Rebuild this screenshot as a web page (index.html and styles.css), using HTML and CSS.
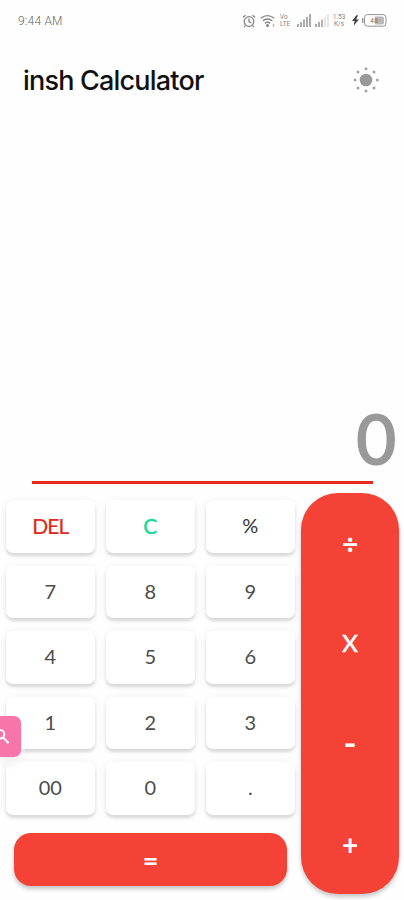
FILE: index.html
```html
<!DOCTYPE html>
<html lang="en">
<head>
<meta charset="utf-8">
<title>insh Calculator</title>
<link rel="stylesheet" href="styles.css">
</head>
<body>
<div class="status">
  <span class="time">9:44 AM</span>
  <div class="indicators">
    <svg class="alarm" width="14" height="14" viewBox="0 0 14 14" fill="none" stroke="#858585" stroke-width="1.3"><circle cx="7" cy="7.5" r="4.8"/><path d="M7 4.5v3.3l2.3 1M1 3.2l2.5-2M13 3.2l-2.5-2M3.3 11.6l-1.2 1.5M10.7 11.6l1.2 1.5"/></svg>
    <svg class="wifi" width="16" height="14" viewBox="0 0 16 14" fill="none" stroke="#858585" stroke-width="1.4"><path d="M.8 4.3Q7.5-1 14.2 4.3M2.8 6.8q4.7-3.6 9.4 0M4.8 9.2q2.7-2 5.4 0"/><circle cx="7.5" cy="11.6" r=".8" fill="#858585"/><path d="M13.5 10v3" stroke="#bbb"/></svg>
    <div class="tiny volte"><span>Vo</span><span>LTE</span></div>
    <svg class="signal" width="14" height="13" viewBox="0 0 14 13" fill="#aaa"><path d="M0 10h2v3H0zM3 8h2v5H3zM6 5.5h2V13H6zM9 3h2v10H9zM12 0h2v13h-2z"/></svg>
    <svg class="signal" width="14" height="13" viewBox="0 0 14 13" fill="#e6e6e6"><path d="M0 10h2v3H0zM3 8h2v5H3z" fill="#aaa"/><path d="M6 5.5h2V13H6z" fill="#b5b5b5"/><path d="M9 3h2v10H9zM12 0h2v13h-2z"/></svg>
    <div class="tiny speed"><span>1.53</span><span>K/s</span></div>
    <svg class="bolt" width="7" height="11" viewBox="0 0 8 12" fill="#444"><path d="M5 0 0 6.7h3L1.8 12 8 4.8H4.7L7 0z"/></svg>
    <svg class="battery" width="25" height="13" viewBox="0 0 25 13"><rect x="2.5" y=".6" width="21.5" height="11.6" rx="3" fill="#fff" stroke="#929292"/><path d="M.7 4v5" stroke="#929292" stroke-width="1.3"/><path d="M13 2.5h7q2 0 2 2v4q0 2-2 2h-7z" fill="#b8b8b8"/><text x="8" y="9.3" class="charge">48</text></svg>
  </div>
</div>
<header class="header">
  <h1>insh Calculator</h1>
  <svg width="28" height="28" viewBox="0 0 28 28" fill="#999"><circle cx="14" cy="14" r="6.3"/><g fill="#a5a5a5"><circle cx="14" cy="2.7" r="1.5"/><circle cx="14" cy="25" r="1.5"/><circle cx="3" cy="14" r="1.5"/><circle cx="25.3" cy="14" r="1.5"/><circle cx="6" cy="6" r="1.5"/><circle cx="22" cy="6" r="1.5"/><circle cx="6" cy="22" r="1.5"/><circle cx="22" cy="22" r="1.5"/></g></svg>
</header>
<main class="display"><span>0</span></main>
<div class="rule"></div>
<section class="pad">
  <div class="left">
    <div class="keys">
      <button class="del">DEL</button><button class="clear">C</button><button class="percent">%</button>
      <button>7</button><button>8</button><button>9</button>
      <button>4</button><button>5</button><button>6</button>
      <button>1</button><button>2</button><button>3</button>
      <button>00</button><button>0</button><button>.</button>
    </div>
    <button class="equals">=</button>
  </div>
  <div class="operators">
    <button>÷</button><button class="times">X</button><button class="minus">-</button><button>+</button>
  </div>
</section>
<div class="bubble"><svg width="21" height="41" viewBox="0 0 21 41" fill="none" stroke="#fff" stroke-width="2"><circle cx="0" cy="18.3" r="4.3"/><path d="m3 21.3 5.6 6"/></svg></div>
</body>
</html>
```
FILE: styles.css
```css
* { box-sizing: border-box; }
body {
  margin: 0;
  width: 404px;
  height: 900px;
  overflow: hidden;
  position: relative;
  display: flex;
  flex-direction: column;
  background: #fefefe;
  font-family: Lato, sans-serif;
}
button { border: 0; padding: 0; margin: 0; background: none; font: inherit; color: inherit; }
.status {
  height: 42px;
  flex: none;
  padding: 0 17px 0 18px;
  display: flex;
  align-items: center;
  justify-content: space-between;
}
.time { font: 300 12px Roboto, sans-serif; color: #666; letter-spacing: 0.2px; }
.indicators { display: flex; align-items: center; height: 14px; margin-top: -1px; }
.alarm { margin-right: 4px; }
.wifi { margin-right: 4px; }
.tiny { display: flex; flex-direction: column; font: 6.5px/6.5px Roboto, sans-serif; color: #888; }
.volte { width: 13px; margin-right: 4px; }
.signal { margin-right: 3.5px; }
.speed { width: 14px; align-items: center; margin-right: 6px; }
.bolt { margin-right: 3px; }
.charge { font: 7px Roboto, sans-serif; fill: #777; }
.header {
  height: 76px;
  flex: none;
  padding: 0 24px 0 23px;
  display: flex;
  align-items: center;
  justify-content: space-between;
}
h1 { margin: 0; padding-top: 1px; font: 500 27px Inter, sans-serif; letter-spacing: -0.8px; color: #111; white-space: nowrap; }
.display {
  flex: 1;
  display: flex;
  align-items: flex-end;
  justify-content: flex-end;
  padding: 0 8px 7px 0;
  font-size: 68px;
  line-height: 72px;
  font-weight: 400;
  color: #999;
  -webkit-text-stroke: 2px #999;
}
.rule { flex: none; height: 3px; margin: 0 31px 0 32px; background: #e52a1c; }
.pad { flex: none; height: 416px; display: flex; padding: 9px 5px 6px 0; justify-content: space-between; }
.left { width: 295px; display: flex; flex-direction: column; padding-top: 7px; }
.keys {
  display: grid;
  grid-template-columns: repeat(3, 88.5px);
  grid-auto-rows: 52.5px;
  gap: 13px 11.5px;
  padding-left: 6px;
  font-size: 20px;
  color: #4c4c4c;
}
.keys button {
  padding-bottom: 2.5px;
  border-radius: 7px;
  background: #fff;
  box-shadow: 0 3px 3px rgba(0, 0, 0, .12), 0 1px 8px rgba(0, 0, 0, .06);
}
.keys .del { color: #dc2b20; font-size: 21px; letter-spacing: -1px; -webkit-text-stroke: 0.2px #dc2b20; }
.keys .clear { color: #13d898; font-size: 21px; -webkit-text-stroke: 0.3px #13d898; }
.keys .percent { color: #333; }
.equals, .operators {
  background: #f44336;
  color: #fff;
  font-weight: 700;
  box-shadow: 0 3px 4px rgba(0, 0, 0, .22);
}
.equals { margin: 18.5px 8px 0 14px; height: 53px; border-radius: 17px; font-size: 27px; }
.operators {
  width: 98px;
  border-radius: 37px;
  display: grid;
  grid-template-rows: repeat(4, 100.25px);
  font-size: 28px;
}
.operators .times { font-size: 24px; font-weight: 400; padding-bottom: 1px; -webkit-text-stroke: 0.6px #fff; }
.operators .minus { font-size: 35px; padding-bottom: 3px; }
.bubble {
  position: absolute;
  left: 0;
  top: 716px;
  width: 21px;
  height: 41px;
  border-radius: 0 7px 7px 0;
  background: #f875aa;
  box-shadow: 0 3px 0 4px rgba(255, 255, 255, .45), 0 5px 8px rgba(0, 0, 0, .12);
}
.bubble svg { display: block; }
```
